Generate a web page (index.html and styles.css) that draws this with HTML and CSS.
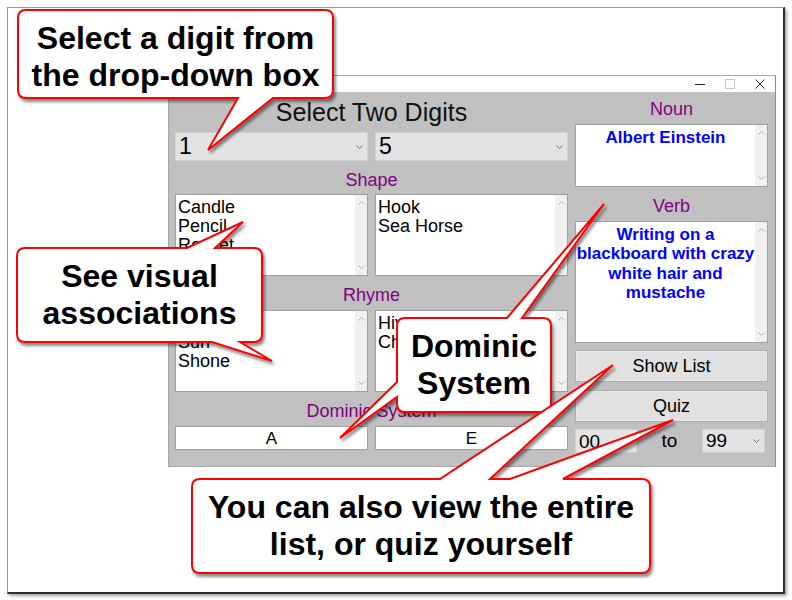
FILE: index.html
```html
<!DOCTYPE html>
<html>
<head>
<meta charset="utf-8">
<link rel="stylesheet" href="styles.css">
</head>
<body>
<div class="frame">
  <div class="window">
    <div class="titlebar">
      <span class="tbtn"><svg width="10" height="10" viewBox="0 0 10 10"><path d="M0 5.5H10" stroke="#222" stroke-width="1"/></svg></span>
      <span class="tbtn"><svg width="10" height="10" viewBox="0 0 10 10"><rect x="0.5" y="0.5" width="9" height="9" fill="none" stroke="#c8c8c8"/></svg></span>
      <span class="tbtn"><svg width="10" height="10" viewBox="0 0 10 10"><path d="M0.5 0.5L9.5 9.5M9.5 0.5L0.5 9.5" stroke="#222" stroke-width="1"/></svg></span>
    </div>
    <div class="client">
      <div class="left">
        <div class="title">Select Two Digits</div>
        <div class="pair">
          <div class="combo big"><span>1</span><svg class="dd" width="7" height="4" viewBox="0 0 7 4"><path d="M0.5 0.5L3.5 3.5L6.5 0.5" fill="none" stroke="#707070"/></svg></div>
          <div class="combo big"><span>5</span><svg class="dd" width="7" height="4" viewBox="0 0 7 4"><path d="M0.5 0.5L3.5 3.5L6.5 0.5" fill="none" stroke="#707070"/></svg></div>
        </div>
        <div class="label">Shape</div>
        <div class="pair">
          <div class="list tall"><div class="items">Candle<br>Pencil<br>Rocket</div><div class="sb"><svg width="7" height="4" viewBox="0 0 7 4"><path d="M0.5 3.5L3.5 0.5L6.5 3.5" fill="none" stroke="#b0b0b0"/></svg><svg width="7" height="4" viewBox="0 0 7 4"><path d="M0.5 0.5L3.5 3.5L6.5 0.5" fill="none" stroke="#b0b0b0"/></svg></div></div>
          <div class="list tall"><div class="items">Hook<br>Sea Horse</div><div class="sb"><svg width="7" height="4" viewBox="0 0 7 4"><path d="M0.5 3.5L3.5 0.5L6.5 3.5" fill="none" stroke="#b0b0b0"/></svg><svg width="7" height="4" viewBox="0 0 7 4"><path d="M0.5 0.5L3.5 3.5L6.5 0.5" fill="none" stroke="#b0b0b0"/></svg></div></div>
        </div>
        <div class="label">Rhyme</div>
        <div class="pair">
          <div class="list tall"><div class="items">Bun<br>Sun<br>Shone</div><div class="sb"><svg width="7" height="4" viewBox="0 0 7 4"><path d="M0.5 3.5L3.5 0.5L6.5 3.5" fill="none" stroke="#b0b0b0"/></svg><svg width="7" height="4" viewBox="0 0 7 4"><path d="M0.5 0.5L3.5 3.5L6.5 0.5" fill="none" stroke="#b0b0b0"/></svg></div></div>
          <div class="list tall"><div class="items">Hive<br>Chive</div><div class="sb"><svg width="7" height="4" viewBox="0 0 7 4"><path d="M0.5 3.5L3.5 0.5L6.5 3.5" fill="none" stroke="#b0b0b0"/></svg><svg width="7" height="4" viewBox="0 0 7 4"><path d="M0.5 0.5L3.5 3.5L6.5 0.5" fill="none" stroke="#b0b0b0"/></svg></div></div>
        </div>
        <div class="label">Dominic System</div>
        <div class="pair">
          <div class="tbox">A</div>
          <div class="tbox">E</div>
        </div>
      </div>
      <div class="right">
        <div class="label rlabel">Noun</div>
        <div class="list noun"><div class="items blue">Albert Einstein</div><div class="sb"><svg width="7" height="4" viewBox="0 0 7 4"><path d="M0.5 3.5L3.5 0.5L6.5 3.5" fill="none" stroke="#b0b0b0"/></svg><svg width="7" height="4" viewBox="0 0 7 4"><path d="M0.5 0.5L3.5 3.5L6.5 0.5" fill="none" stroke="#b0b0b0"/></svg></div></div>
        <div class="label">Verb</div>
        <div class="list verb"><div class="items blue">Writing on a<br>blackboard with crazy<br>white hair and<br>mustache</div><div class="sb"><svg width="7" height="4" viewBox="0 0 7 4"><path d="M0.5 3.5L3.5 0.5L6.5 3.5" fill="none" stroke="#b0b0b0"/></svg><svg width="7" height="4" viewBox="0 0 7 4"><path d="M0.5 0.5L3.5 3.5L6.5 0.5" fill="none" stroke="#b0b0b0"/></svg></div></div>
        <div class="btn">Show List</div>
        <div class="btn">Quiz</div>
        <div class="range">
          <div class="num">00</div>
          <span class="to">to</span>
          <div class="combo small"><span>99</span><svg class="dd" width="7" height="4" viewBox="0 0 7 4"><path d="M0.5 0.5L3.5 3.5L6.5 0.5" fill="none" stroke="#707070"/></svg></div>
        </div>
      </div>
    </div>
  </div>
</div>

<svg class="callouts" width="792" height="600" viewBox="0 0 792 600">
  <defs>
    <filter id="sh" x="-10%" y="-10%" width="130%" height="140%">
      <feDropShadow dx="2" dy="3" stdDeviation="1.6" flood-color="#000" flood-opacity="0.45"/>
    </filter>
  </defs>
  <g fill="#fff" stroke="#ff0000" stroke-width="2" stroke-linejoin="miter" filter="url(#sh)">
    <path d="M26,10 H325 Q333,10 333,18 V90 Q333,98 325,98 H273 L208,150 L238,98 H26 Q18,98 18,90 V18 Q18,10 26,10 Z"/>
    <path d="M25,248 H187 L243,222 L215,248 H254 Q262,248 262,256 V334 Q262,342 254,342 H240 L272,361 L212,342 H25 Q17,342 17,334 V256 Q17,248 25,248 Z"/>
    <path d="M405,318 H507 L604,204 L522,318 H543 Q551,318 551,326 V404 Q551,412 543,412 H405 Q397,412 397,404 V397 L340,438 L397,382 V326 Q397,318 405,318 Z"/>
    <path d="M200,479 H440 L613,365 L490,479 H510 L673,420 L563,479 H642 Q650,479 650,487 V565 Q650,573 642,573 H200 Q192,573 192,565 V487 Q192,479 200,479 Z"/>
  </g>
</svg>
<div class="ctext c1">Select a digit from<br>the drop-down box</div>
<div class="ctext c2">See visual<br>associations</div>
<div class="ctext c3">Dominic<br>System</div>
<div class="ctext c4">You can also view the entire<br>list, or quiz yourself</div>
</body>
</html>
```

FILE: styles.css
```css
html, body {
  margin: 0;
  padding: 0;
  width: 792px;
  height: 600px;
  overflow: hidden;
  background: #fff;
}
body {
  position: relative;
  padding: 7px 0 0 7px;
  box-sizing: border-box;
  font-family: "Liberation Sans", Arial, sans-serif;
  color: #000;
}
.frame {
  width: 778px;
  height: 587px;
  box-sizing: border-box;
  border-left: 1px solid #9a9a9a;
  border-top: 1px solid #9a9a9a;
  border-right: 2px solid #2e2e2e;
  border-bottom: 2px solid #2e2e2e;
  box-shadow: 2px 2px 3px rgba(0,0,0,0.35);
  padding: 67px 0 0 160px;
}
.window {
  width: 608px;
  box-sizing: border-box;
  border: 1px solid #a8a8a8;
  border-right-color: #8a8a8a;
  background: #c0c0c0;
}
.titlebar {
  height: 16px;
  background: #fff;
  display: flex;
  justify-content: flex-end;
}
.tbtn {
  width: 30px;
  display: flex;
  align-items: center;
  justify-content: center;
}
.tbtn svg { display: block; }
.client {
  height: 374px;
  display: flex;
  gap: 7px;
  padding: 0 7px 0 6px;
  font-size: 18px;
}
.left {
  width: 393px;
  display: flex;
  flex-direction: column;
}
.right {
  width: 193px;
  display: flex;
  flex-direction: column;
}
.title {
  height: 40px;
  line-height: 41px;
  text-align: center;
  font-size: 25px;
  color: #111;
}
.pair {
  display: grid;
  grid-template-columns: 193px 193px;
  gap: 7px;
}
.combo {
  height: 29px;
  box-sizing: border-box;
  background: #e3e3e3;
  border: 1px solid #d2d2d2;
  display: flex;
  align-items: center;
  justify-content: space-between;
  padding: 0 4px 0 3px;
}
.combo.big span { font-size: 23px; }
.combo .dd { display: block; }
.label {
  height: 34px;
  line-height: 38px;
  text-align: center;
  color: #800080;
}
.left .label:nth-of-type(3) { height: 33px; }
.rlabel { height: 32px; line-height: 34px; }
.list {
  box-sizing: border-box;
  background: #fff;
  border: 1px solid #a0a0a0;
  display: flex;
}
.list.tall { height: 82px; }
.items {
  flex: 1;
  padding: 3px 0 0 2px;
  line-height: 19px;
  white-space: nowrap;
  overflow: hidden;
}
.sb {
  width: 12px;
  background: #f0f0f0;
  display: flex;
  flex-direction: column;
  justify-content: space-between;
  align-items: center;
  padding: 6px 0 6px;
}
.sb svg { display: block; }
.blue {
  color: #0000ff;
  font-weight: bold;
  font-size: 17px;
  text-align: center;
  padding: 3px 0 0 0;
  line-height: 19.3px;
}
.noun { height: 63px; }
.verb { height: 122px; }
.tbox {
  height: 24px;
  box-sizing: border-box;
  background: #fff;
  border: 1px solid #a0a0a0;
  text-align: center;
  line-height: 23px;
  font-size: 17px;
}
.btn {
  height: 32px;
  margin-top: 7px;
  box-sizing: border-box;
  background: #e1e1e1;
  border: 1px solid #adadad;
  box-shadow: inset 0 0 0 1px #e8e8e8;
  text-align: center;
  line-height: 30px;
}
.btn + .btn { margin-top: 8px; }
.range {
  margin-top: 7px;
  height: 24px;
  display: flex;
  align-items: center;
}
.num {
  width: 62px;
  height: 24px;
  box-sizing: border-box;
  background: #e3e3e3;
  border: 1px solid #d2d2d2;
  line-height: 24px;
  padding-left: 3px;
  font-size: 19px;
}
.to {
  width: 65px;
  text-align: center;
  font-size: 19px;
}
.combo.small {
  width: 63px;
  height: 24px;
  font-size: 19px;
}
.callouts {
  position: absolute;
  left: 0;
  top: 0;
  pointer-events: none;
  overflow: visible;
}
.ctext {
  position: absolute;
  display: flex;
  align-items: center;
  justify-content: center;
  text-align: center;
  font-family: "Liberation Sans", Arial, sans-serif;
  font-weight: bold;
  font-size: 32px;
  line-height: 37px;
  color: #000;
  box-sizing: border-box;
  white-space: nowrap;
}
.c1 { left: 18px; top: 10px; width: 315px; height: 88px; padding-top: 6px; }
.c2 { left: 17px; top: 248px; width: 245px; height: 94px; }
.c3 { left: 397px; top: 318px; width: 154px; height: 94px; }
.c4 { left: 192px; top: 479px; width: 458px; height: 94px; }
```
